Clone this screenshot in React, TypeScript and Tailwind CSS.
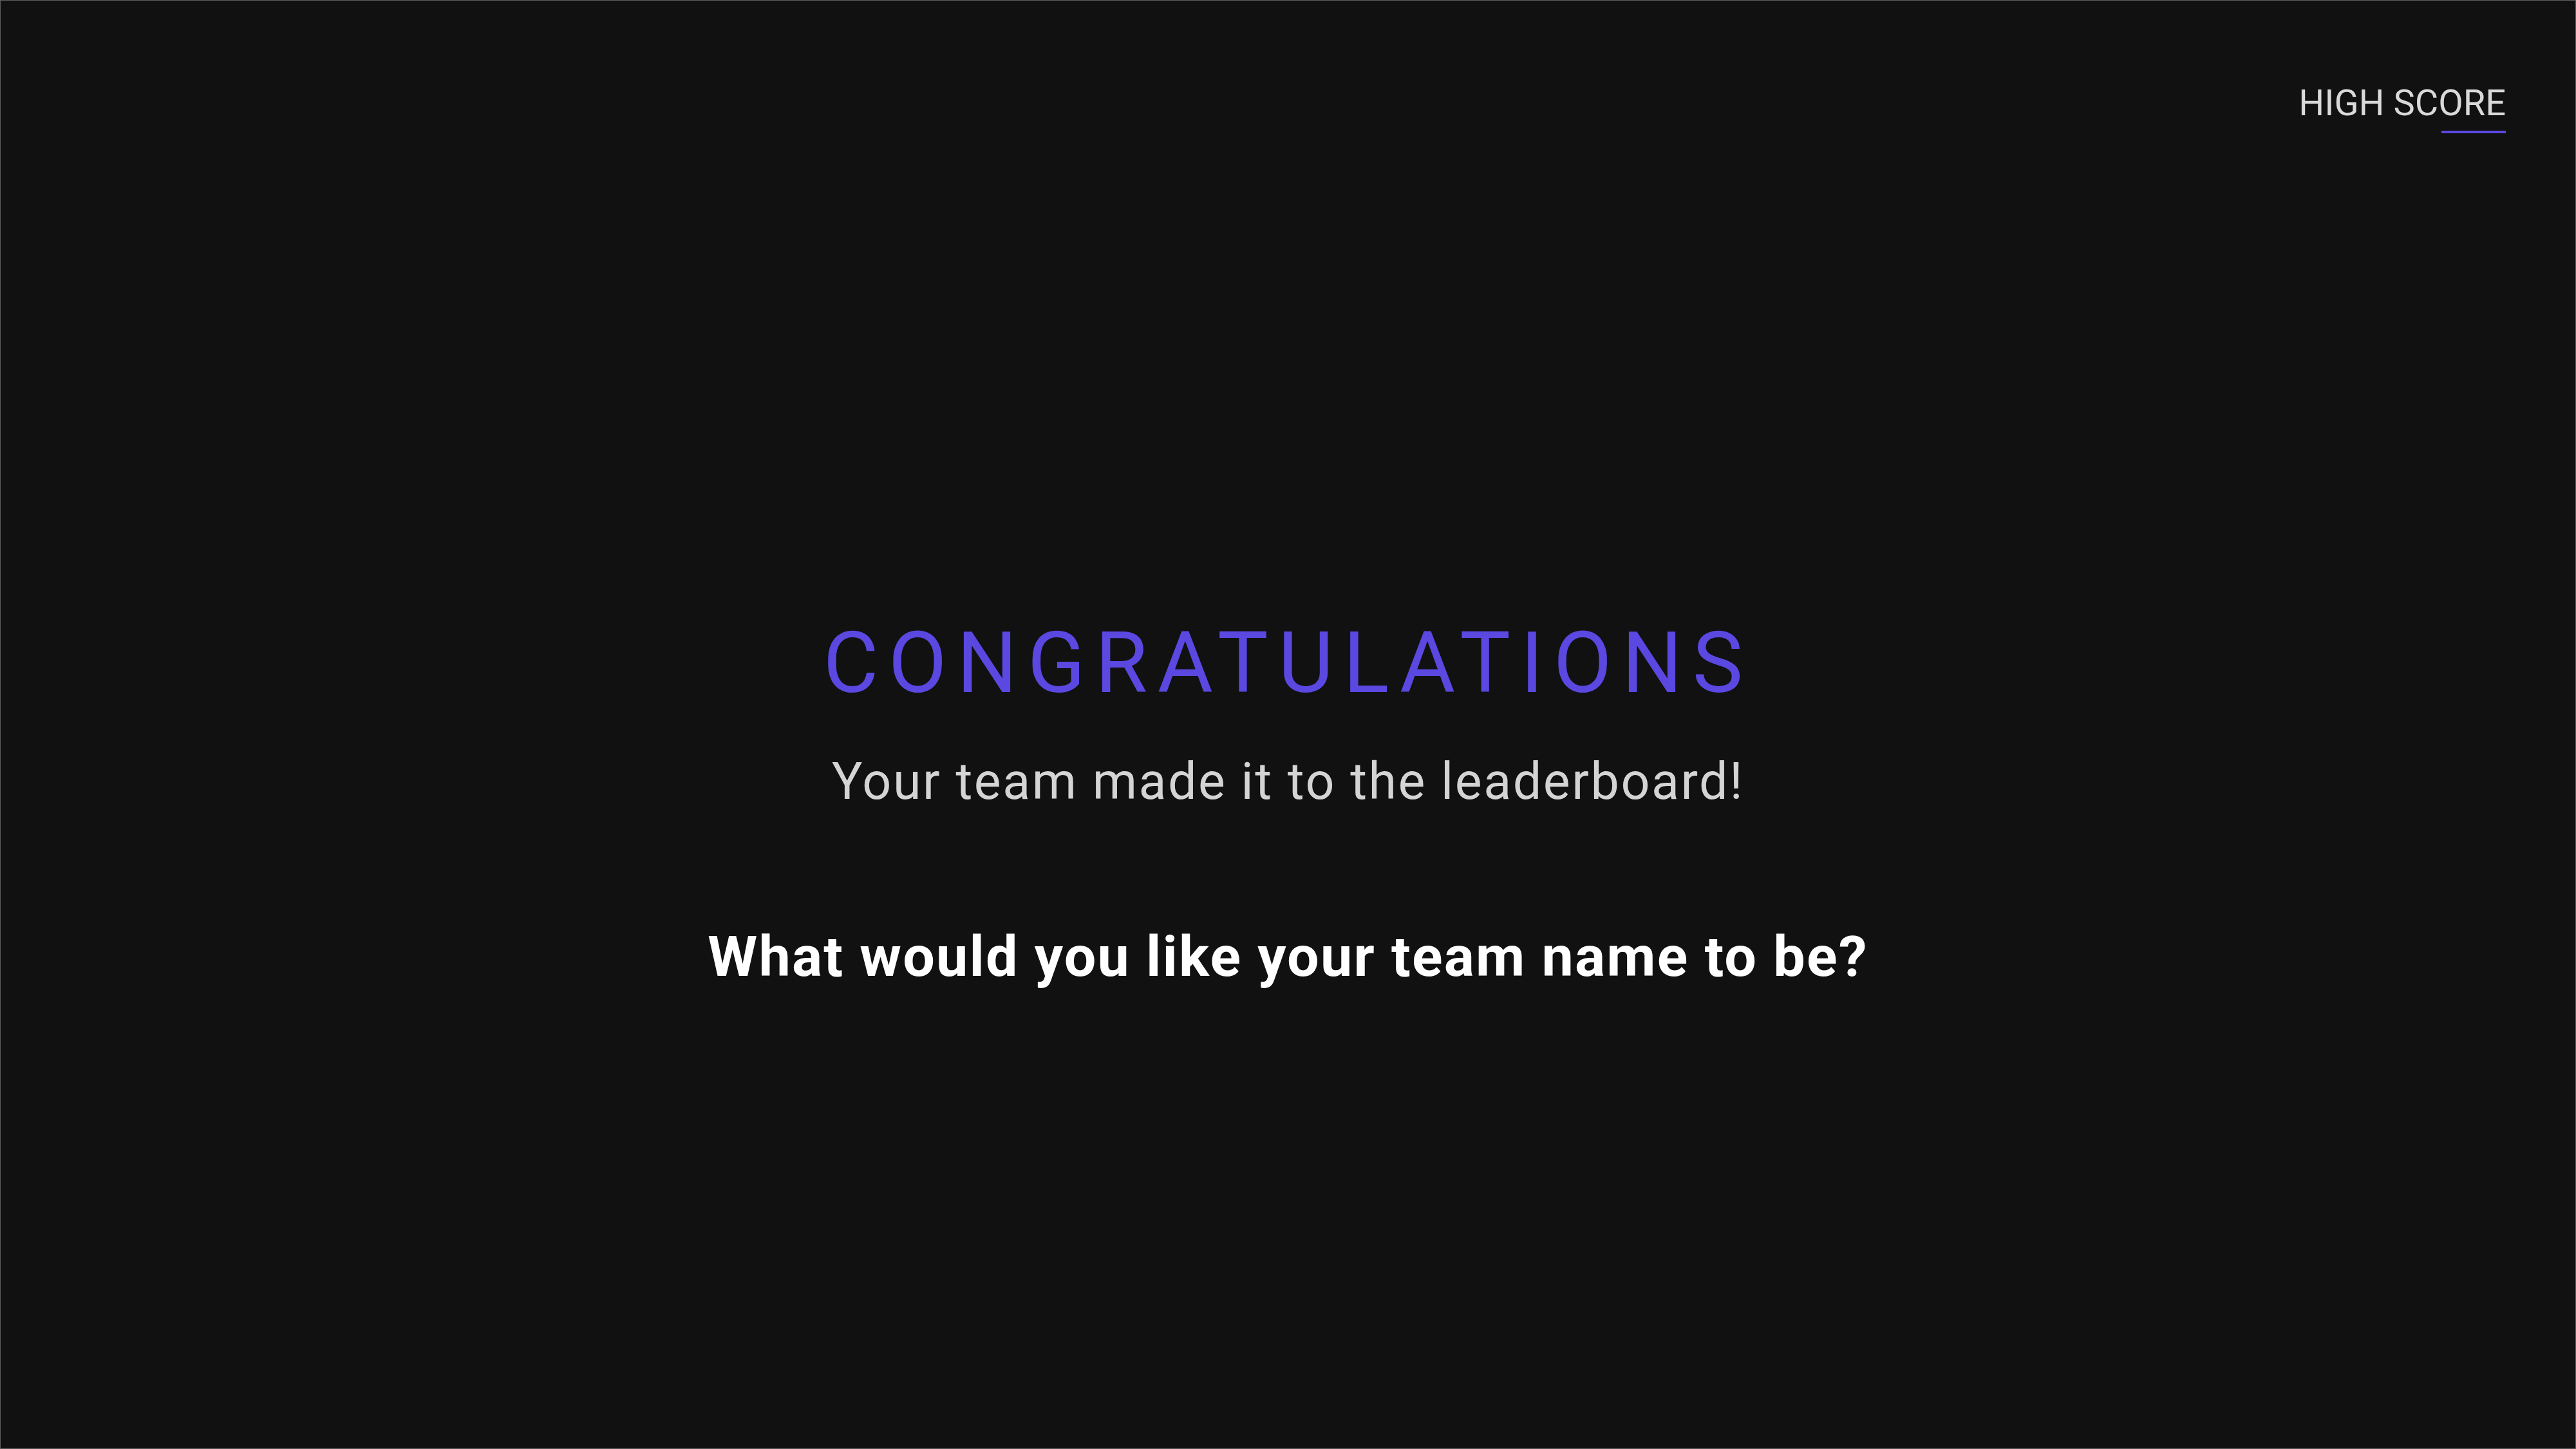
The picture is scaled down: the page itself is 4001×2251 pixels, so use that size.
export default function App() {
  return (
    <div className="flex h-[2251px] w-full flex-col border border-[#5e5e5e] bg-[#111111] font-[Roboto,'Liberation_Sans',sans-serif]">
      <header className="flex justify-end pt-[131px] pr-[108px]">
        <div className="flex flex-col items-end">
          <span className="text-[56px] leading-none text-[#d9d9d9]">
            HIGH SCORE
          </span>
          <span className="mt-[15px] h-[4px] w-[100px] bg-[#5b48e0]" />
        </div>
      </header>

      <main className="flex flex-col items-center pt-[757px]">
        <h1 className="text-[132px] leading-none tracking-[0.117em] text-[#5a48e1]">
          CONGRATULATIONS
        </h1>
        <p className="mt-[79px] text-[79px] leading-none tracking-[0.032em] text-[#d4d4d4]">
          Your team made it to the leaderboard!
        </p>
        <h2 className="mt-[188px] text-[88px] font-bold leading-none tracking-[0.025em] text-white">
          What would you like your team name to be?
        </h2>
      </main>
    </div>
  );
}
